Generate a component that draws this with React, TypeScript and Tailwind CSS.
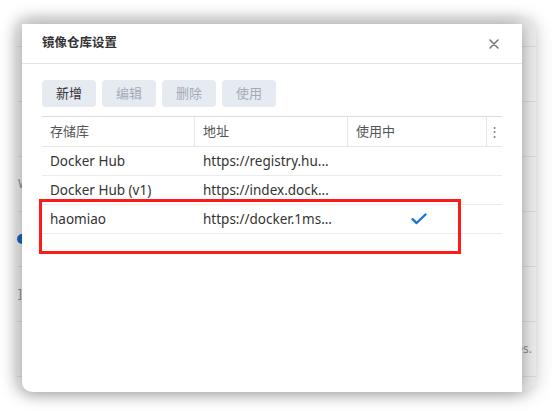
import { FC } from "react";

// registry rows shown in the dialog table
const registries = [
  { name: "Docker Hub", url: "https://registry.hu...", active: false },
  { name: "Docker Hub (v1)", url: "https://index.dock...", active: false },
  { name: "haomiao", url: "https://docker.1ms...", active: true },
];

const font = "font-['Noto_Sans','Noto_Sans_CJK_SC',sans-serif]";

const Check = () => (
  <svg width="16" height="12" viewBox="0 0 16 12" fill="none">
    <path
      d="M1.5 6.2 L5.6 10 L14.5 1.5"
      stroke="#1a73d9"
      strokeWidth="2.4"
      strokeLinecap="round"
      strokeLinejoin="round"
    />
  </svg>
);

const App: FC = () => {
  return (
    <div className={`w-[555px] h-[411px] bg-white overflow-hidden pl-[17px] pt-[18px] ${font}`}>
      {/* window behind the dialog */}
      <div className="relative w-[519px] h-[372px] rounded-[12px] bg-[#ececec] shadow-[0_2px_18px_rgba(0,0,0,0.22)]">
        <div className="flex flex-col text-[12px] text-[#8a8a8a]">
          <div className="h-[29px] border-b border-[#d6d9de]" />
          <div className="h-[55px] border-b border-[#d6d9de]" />
          <div className="h-[55px] border-b border-[#d6d9de]" />
          <div className="h-[55px] border-b border-[#d6d9de] flex items-center pl-[1px]">W</div>
          <div className="h-[55px] border-b border-[#d6d9de] flex items-center">
            <span className="w-[10px] h-[10px] rounded-full bg-[#1565c0]" />
          </div>
          <div className="h-[55px] border-b border-[#d6d9de] flex items-center pl-[1px]">]</div>
          <div className="h-[55px] border-b border-[#d6d9de] flex items-center justify-end pr-[4px]">
            registry images.
          </div>
        </div>

        {/* dialog */}
        <div className="absolute left-[5px] top-[6px] w-[500px] h-[368px] bg-white rounded-bl-[10px] shadow-[0_0_18px_rgba(0,0,0,0.35)]">
          <div className="h-[40px] border-b border-[#dfe4ec] flex items-center justify-between pl-[20px] pr-[23px]">
            <span className="text-[12.5px] font-semibold text-[#333]">镜像仓库设置</span>
            <svg width="10" height="10" viewBox="0 0 10 10">
              <path d="M1 1 L9 9 M9 1 L1 9" stroke="#74787e" strokeWidth="1.6" strokeLinecap="round" />
            </svg>
          </div>

          <div className="px-[20px] pt-[16px]">
            <div className="flex gap-[6px]">
              <button className="w-[54px] h-[27px] rounded-[4px] bg-[#e6eaf1] text-[13px] text-[#333]">新增</button>
              <button className="w-[54px] h-[27px] rounded-[4px] bg-[#e6eaf1] text-[13px] text-[#a3abb7]">编辑</button>
              <button className="w-[54px] h-[27px] rounded-[4px] bg-[#e6eaf1] text-[13px] text-[#a3abb7]">删除</button>
              <button className="w-[54px] h-[27px] rounded-[4px] bg-[#e6eaf1] text-[13px] text-[#a3abb7]">使用</button>
            </div>

            <div className="mt-[9px] border-t border-[#d7dde6] text-[13.5px]">
              <div className="flex h-[30px] border-b border-[#e3e7ed] text-[#555] text-[13px]">
                <div className="w-[152px] flex items-center pl-[8px]">存储库</div>
                <div className="w-[153px] flex items-center pl-[8px] border-l border-[#e3e7ed]">地址</div>
                <div className="w-[139px] flex items-center pl-[8px] border-l border-[#e3e7ed]">使用中</div>
                <div className="flex-1 flex items-center justify-center border-l border-[#e3e7ed] text-[#777]">⋮</div>
              </div>
              {registries.map((r) => (
                <div key={r.name} className="flex h-[29px] border-b border-[#e8ebf0] text-[#333]">
                  <div className="w-[152px] flex items-center pl-[8px]">{r.name}</div>
                  <div className="w-[153px] flex items-center pl-[9px]">{r.url}</div>
                  <div className="w-[139px] flex items-center justify-center pl-[4px]">
                    {r.active && <Check />}
                  </div>
                </div>
              ))}
            </div>
          </div>

          {/* red highlight around the selected row */}
          <div className="absolute left-[17px] top-[175px] w-[422px] h-[55px] border-[3px] border-[#ff1a1a]" />
        </div>
      </div>
    </div>
  );
};

export default App;
